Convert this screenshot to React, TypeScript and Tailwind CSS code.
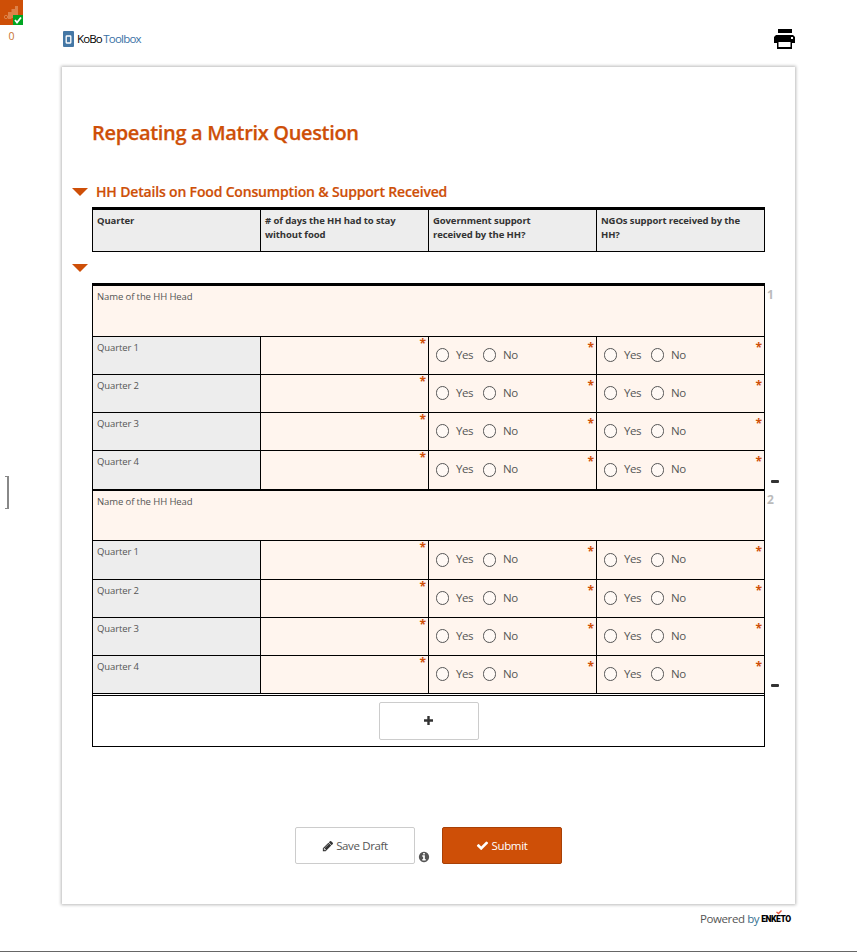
import React from "react";

function Triangle() {
  return <div className="h-0 w-0 border-x-8 border-t-8 border-x-transparent border-t-[#ce4f07]" />;
}

function Star({ className }: { className: string }) {
  return <span className={`absolute right-[2px] text-[12px] leading-[14px] font-bold text-[#ce4f07] ${className}`}>*</span>;
}

function Glyph({ d, className }: { d: string; className: string }) {
  return (
    <svg viewBox="0 0 1792 1792" fill="currentColor" className={className}>
      <path d={d} />
    </svg>
  );
}

const PENCIL =
  "M491 1536l91-91-235-235-91 91v107h128v128h107zm523-928q0-22-22-22-10 0-17 7l-542 542q-7 7-7 17 0 22 22 22 10 0 17-7l542-542q7-7 7-17zm-54-192l416 416-832 832h-416v-416zm683 96q0 53-37 90l-166 166-416-416 166-165q36-38 90-38 53 0 91 38l235 234q37 39 37 91z";
const CHECK =
  "M1671 566q0 40-28 68l-724 724-136 136q-28 28-68 28t-68-28l-136-136-362-362q-28-28-28-68t28-68l136-136q28-28 68-28t68 28l294 295 656-657q28-28 68-28t68 28l136 136q28 28 28 68z";
const INFO =
  "M1152 1376v-160q0-14-9-23t-23-9h-96v-512q0-14-9-23t-23-9h-320q-14 0-23 9t-9 23v160q0 14 9 23t23 9h96v320h-96q-14 0-23 9t-9 23v160q0 14 9 23t23 9h448q14 0 23-9t9-23zm-128-896v-160q0-14-9-23t-23-9h-192q-14 0-23 9t-9 23v160q0 14 9 23t23 9h192q14 0 23-9t9-23zm640 416q0 209-103 385.500t-279.500 279.500-385.500 103-385.500-103-279.500-279.500-103-385.500 103-385.500 279.500-279.500 385.500-103 385.500 103 279.500 279.500 103 385.500z";

function Option({ label }: { label: string }) {
  return (
    <label className="flex w-[47px] items-center">
      <span className="h-[14px] w-[13px] shrink-0 rounded-full border border-[#555] bg-white/40" />
      <span className="-mt-px ml-[7px] text-[11.500px] leading-4 tracking-[-0.4px]">{label}</span>
    </label>
  );
}

function Choice() {
  return (
    <div className="relative flex w-[168px] items-center border-l border-black pb-px pl-[7px]">
      <Option label="Yes" />
      <Option label="No" />
      <Star className="top-[4px]" />
    </div>
  );
}

function Row({ n, height }: { n: number; height: string }) {
  return (
    <div className={`flex border-t border-black ${height}`}>
      <div className="w-[167px] bg-[#ededed] pt-[4px] pl-1 text-[9.5px] leading-[14px] tracking-[-0.12px]">Quarter {n}</div>
      <div className="relative w-[168px] border-l border-black">
        <Star className="top-0" />
      </div>
      <Choice />
      <Choice />
    </div>
  );
}

function Household({ n, name, heights }: { n: number; name: string; heights: string[] }) {
  return (
    <section className="relative border-x border-black bg-[#fff5ee]">
      <div className={`pt-[4px] pl-1 text-[9.5px] leading-[14px] tracking-[-0.1px] ${name}`}>Name of the HH Head</div>
      {heights.map((h, i) => (
        <Row key={i} n={i + 1} height={h} />
      ))}
      <span className="absolute top-0 left-[674px] text-[12px] leading-[18px] font-bold text-[#bbb]">{n}</span>
      <span className="absolute bottom-[6px] left-[678px] h-[3px] w-[8px] rounded-[1px] bg-[#333]" />
    </section>
  );
}

function Header() {
  const cells = ["Quarter", "# of days the HH had to stay without food", "Government support received by the HH?", "NGOs support received by the HH?"];
  return (
    <div className="mt-[5px] flex h-[45px] border border-t-[3px] border-black bg-[#ededed]">
      {cells.map((c, i) => (
        <div
          key={c}
          className={`pt-1 pl-1 text-[9.5px] leading-[14px] font-bold tracking-[-0.1px] text-[#333] ${i === 0 ? "w-[167px]" : "w-[168px] border-l border-black"} ${i === 2 ? "pr-10" : "pr-4"}`}
        >
          {c}
        </div>
      ))}
    </div>
  );
}

export default function App() {
  return (
    <div className="relative h-[952px] w-[857px] overflow-hidden border-b border-[#666] bg-white font-['Open_Sans',sans-serif] text-[#555]">
      <aside className="absolute top-0 left-0 w-[23px]">
        <div className="relative h-[25px] bg-[#ce4f07]">
          <svg className="h-[25px] w-[23px]" viewBox="0 0 23 25">
            <g fill="#dd8148">
              <circle cx="6" cy="17" r="1.7" fill="none" stroke="#dd8148" />
              <path d="M8 12h3.500v7H8zM11.500 9H15v9h-3.500zM15 6h3v9h-3z" />
            </g>
            <path fill="#00a522" d="M13 15h10v10H13z" />
            <path d="m15 20 2 2.500 4-5" fill="none" stroke="#fff" strokeWidth="1.800" />
          </svg>
        </div>
        <div className="pt-[3px] text-center text-[10.5px] leading-4 text-[#c87430]">0</div>
      </aside>
      <div className="absolute top-[476px] left-[5px] h-[33px] w-[4px] border-y border-r-2 border-[#888]" />

      <header className="flex h-[67px] justify-between pl-[63px] pr-[62px]">
        <div className="mt-[31px] flex h-[16px] items-center">
          <svg className="h-[16px] w-[11px]" viewBox="0 0 11 16">
            <rect width="11" height="16" rx="1" fill="#4477a5" />
            <rect x="3.200" y="5" width="4.600" height="7" rx=".5" fill="none" stroke="#fff" strokeWidth="1.300" />
          </svg>
          <span className="ml-[3px] text-[11.500px] leading-4 tracking-[-0.9px] text-black">KoBo</span>
          <span className="ml-[1.500px] text-[11.500px] leading-4 tracking-[-0.78px] text-[#3b71a6]">Toolbox</span>
        </div>
        <svg className="mt-[29px] h-[20px] w-[21px]" viewBox="0 0 21 20">
          <path d="M4 0h14v4H4z" />
          <path d="M2 6h17l2 2v6h-3v6H3v-6H0V8z" />
          <path fill="#fff" d="M4.500 13h12v5h-12zM17 8h2v2h-2z" />
        </svg>
      </header>

      <main className="ml-[62px] h-[837px] w-[733px] bg-white pt-[50px] pl-[30px] shadow-[0_0_3px_1px_#bbb]">
        <h1 className="text-[20px] leading-[32px] font-semibold tracking-[-0.33px] text-[#ce4f07] [-webkit-text-stroke:0.25px_#ce4f07]">Repeating a Matrix Question</h1>
        <div className="w-[673px]">
          <div className="-ml-5 mt-[33px] flex h-5 items-center gap-2">
            <Triangle />
            <h2 className="text-[14px] leading-5 font-semibold tracking-[-0.17px] text-[#ce4f07] [-webkit-text-stroke:0.2px_#ce4f07]">HH Details on Food Consumption &amp; Support Received</h2>
          </div>
          <Header />
          <div className="-ml-5 flex h-[31px] items-center pt-[1px]">
            <Triangle />
          </div>
          <div className="border-t-[3px] border-black">
            <Household n={1} name="h-[50px]" heights={["h-[38px]", "h-[38px]", "h-[38px]", "h-[39px]"]} />
            <div className="h-[2px] bg-black" />
            <Household n={2} name="h-[49px]" heights={["h-[39px]", "h-[38px]", "h-[38px]", "h-[38px]"]} />
          </div>
          <div className="h-[3px] border border-black" />
          <div className="flex h-[51px] items-center justify-center border border-t-0 border-black">
            <button className="flex h-[38px] w-[100px] items-center justify-center rounded-[2px] border border-[#ccc] pb-px text-[#333]">
              <svg className="h-[9px] w-[9px]" viewBox="0 0 9 9" fill="currentColor">
                <path d="M3.300 0h2.400v3.300H9v2.400H5.700V9H3.300V5.700H0V3.300h3.300z" />
              </svg>
            </button>
          </div>
          <div className="mt-[80px] ml-[203px] flex h-[37px]">
            <button className="flex w-[120px] items-center justify-center gap-[2px] rounded-[2px] border border-[#ccc] text-[11.500px] tracking-[-0.36px]">
              <Glyph d={PENCIL} className="h-[12px] w-[12px] text-[#333]" />
              Save Draft
            </button>
            <Glyph d={INFO} className="mt-[24px] ml-[3px] h-[12px] w-[12px]" />
            <button className="ml-[12px] flex w-[120px] items-center justify-center gap-[2px] rounded-[2px] border border-[#a84006] bg-[#ce4f07] text-[11.500px] tracking-[-0.3px] text-white">
              <Glyph d={CHECK} className="h-[13px] w-[13px]" />
              Submit
            </button>
          </div>
        </div>
      </main>
      <footer className="flex items-center pt-[5px] pl-[700px]">
        <span className="text-[11.500px] leading-[18px] tracking-[-0.4px]">
          Powered <span className="text-[#356f8f]">by</span>
        </span>
        <span className="relative ml-[2px] pt-px font-['Roboto',sans-serif] text-[8.500px] leading-[18px] font-black tracking-[-0.45px] text-black">
          ENKETO
          <svg className="absolute top-[1px] left-[15px] h-[5px] w-[6px]" viewBox="0 0 6 5">
            <path d="m0.500 2 2 1.500 3-3" fill="none" stroke="#e5533c" strokeWidth="1.400" />
          </svg>
        </span>
      </footer>
    </div>
  );
}
